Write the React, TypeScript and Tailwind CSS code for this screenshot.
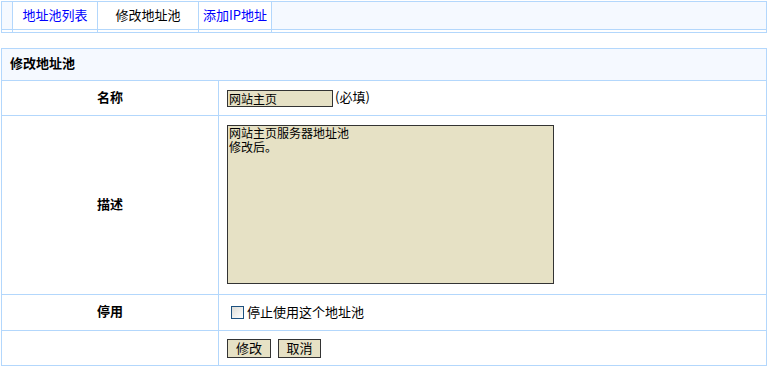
import type { ReactNode } from 'react';

const line = 'border-[#b3d7fc]';

function TabCell({ children, width, fill, active, grow }: { children?: ReactNode; width?: string; fill?: boolean; active?: boolean; grow?: boolean }) {
  return (
    <div className={`flex flex-col border-r ${line} ${width ?? ''} ${grow ? 'flex-1 border-r-0' : ''}`}>
      <div className={`flex h-[28px] items-center justify-center border-b ${line} ${fill ? 'bg-[#f5f9ff]' : 'bg-white'}`}>
        {children && (
          <span className={`-translate-y-[1px] ${active ? 'text-black' : 'cursor-pointer text-[#0000ff]'}`}>{children}</span>
        )}
      </div>
      <div className="h-[2px] bg-white" />
    </div>
  );
}

function Row({ label, children, h, top }: { label?: string; children: ReactNode; h: string; top?: boolean }) {
  return (
    <div className={`flex border-b ${line} ${h}`}>
      <div className={`flex w-[217px] shrink-0 items-center justify-center border-r ${line} font-bold`}>
        <span className="-translate-y-[2px]">{label}</span>
      </div>
      <div className={`flex flex-1 pl-2 ${top ? 'items-start pt-[9px]' : 'items-center'}`}>{children}</div>
    </div>
  );
}

export default function App() {
  return (
    <div className="min-h-[367px] bg-white pt-[1px] font-['Noto_Sans_CJK_SC','Liberation_Sans',sans-serif] text-[13px] leading-none text-black">
      {/* tabs */}
      <div className={`ml-[1px] flex w-[766px] border-x border-t border-b ${line}`}>
        <TabCell width="w-[11px]" fill />
        <TabCell width="w-[85px]">地址池列表</TabCell>
        <TabCell width="w-[101px]" active>修改地址池</TabCell>
        <TabCell width="w-[73px]">添加IP地址</TabCell>
        <TabCell grow fill />
      </div>

      {/* form */}
      <div className={`ml-[1px] mt-[15px] w-[766px] border-x border-t ${line}`}>
        <div className={`flex h-[32px] items-center border-b ${line} bg-[#f5f9ff] pl-2 font-bold`}>
          <span className="-translate-y-[2px]">修改地址池</span>
        </div>

        <Row label="名称" h="h-[35px]">
          <input
            defaultValue="网站主页"
            className="h-[17px] w-[106px] border border-[#333] bg-[#e6e1c5] px-[1px] text-[12px] leading-none outline-none"
          />
          <span className="ml-[2px] -translate-y-[2px]">(必填)</span>
        </Row>

        <Row label="描述" h="h-[179px]" top>
          <textarea
            defaultValue={'网站主页服务器地址池\n修改后。'}
            className="h-[159px] w-[327px] resize-none border border-[#333] bg-[#e6e1c5] px-[1px] py-0 text-[12px] leading-[14px] outline-none"
          />
        </Row>

        <Row label="停用" h="h-[36px]">
          <label className="ml-1 flex items-center">
            <span className="block h-[13px] w-[13px] border border-[#1c5180] bg-gradient-to-br from-[#dcdcd7] to-white" />
            <span className="ml-[3px] -translate-y-[1px]">停止使用这个地址池</span>
          </label>
        </Row>

        <Row h="h-[35px]">
          <div className="flex gap-[7px]">
            <button className="h-[19px] w-[44px] border border-[#333] bg-[#e6e1c5] pb-[2px] text-[13px] leading-none">修改</button>
            <button className="h-[19px] w-[43px] border border-[#333] bg-[#e6e1c5] pb-[2px] text-[13px] leading-none">取消</button>
          </div>
        </Row>
      </div>
    </div>
  );
}
